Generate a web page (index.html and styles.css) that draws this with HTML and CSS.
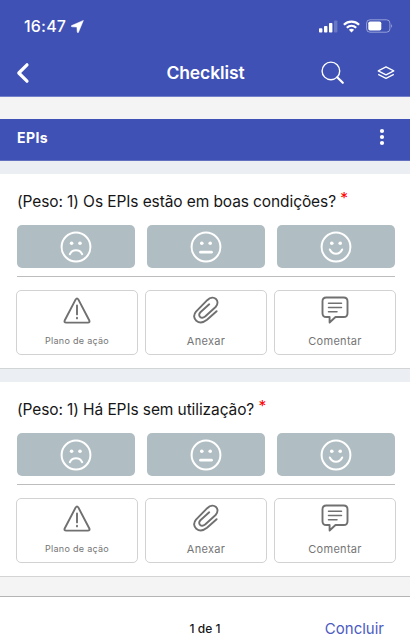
FILE: index.html
```html
<!DOCTYPE html>
<html lang="pt-BR">
  <head>
    <meta charset="UTF-8">
    <meta name="viewport" content="width=device-width, initial-scale=1">
    <title>Checklist</title>
    <link rel="stylesheet" href="styles.css">
  </head>
  <body>
    <svg class="sprite" width="0" height="0">
      <symbol id="sad" viewBox="0 0 32 32">
        <circle cx="16" cy="16" r="14.4"/>
        <circle class="eye" cx="11.6" cy="12.2" r="1.8"/>
        <circle class="eye" cx="20" cy="12.2" r="1.8"/>
        <path d="M9.8 23.2c2.6-5.2 9.8-5.2 12.4 0"/>
      </symbol>
      <symbol id="neutral" viewBox="0 0 32 32">
        <circle cx="16" cy="16" r="14.4"/>
        <circle class="eye" cx="11.8" cy="12.2" r="1.8"/>
        <circle class="eye" cx="20.2" cy="12.2" r="1.8"/>
        <path stroke-width="2.8" d="M10.5 21.2h11"/>
      </symbol>
      <symbol id="happy" viewBox="0 0 32 32">
        <circle cx="16" cy="16" r="14.4"/>
        <circle class="eye" cx="11.8" cy="12.2" r="1.8"/>
        <circle class="eye" cx="20.2" cy="12.2" r="1.8"/>
        <path d="M9.8 18.5c2.6 5.6 9.8 5.6 12.4 0"/>
      </symbol>
      <symbol id="warning" viewBox="0 0 28 28">
        <path d="M12.7 3.4 1.8 24.2Q.7 26.6 3.2 26.6H24.8Q27.3 26.6 26.2 24.2L15.3 3.4Q14 1.3 12.7 3.4Z"/>
        <path d="M14 9.4v9M14 21.8v.6"/>
      </symbol>
      <symbol id="clip" viewBox="0 0 28 28">
        <path d="M24.6 15.2 15 23.8C6.8 30.4-1.7 22.2 4 15.6L15.2 4.2C22-2.3 29 5.2 23.6 11L13.4 20.3C8.9 24 5.2 19.3 8.4 16.2L17.2 8.3"/>
      </symbol>
      <symbol id="comment" viewBox="0 0 28 28">
        <path d="M5.3 1.5H22.7Q26.5 1.5 26.5 5.3V17.2Q26.5 21 22.7 21H14.5L8.6 26.5V21H5.3Q1.5 21 1.5 17.2V5.3Q1.5 1.5 5.3 1.5Z"/>
        <path stroke-width="1.5" d="M7.5 7.2h13M7.5 11.5h13M7.5 15.8h8.5"/>
      </symbol>
    </svg>

    <header class="header">
      <div class="status-bar">
        <span class="time">16:47</span>
        <svg class="location" width="13" height="13" viewBox="0 0 13 13"><path d="M12.4.4.6 5.6q-1 .8.3 1.2l5 .3.3 5q.5 1.3 1.2.3Z" fill="#fff" stroke="#fff" stroke-width=".5"/></svg>
        <svg class="signal" width="19" height="13" viewBox="0 0 19 13" fill="#fff">
          <rect x="0" y="8.3" width="3.4" height="4.2" rx=".8"/>
          <rect x="5" y="6" width="3.4" height="6.5" rx=".8"/>
          <rect x="10" y="3" width="3.4" height="9.5" rx=".8"/>
          <rect x="15" y=".5" width="3.4" height="12" rx=".8" opacity=".22"/>
        </svg>
        <svg class="wifi" width="17" height="13" viewBox="0 0 17 13" fill="none" stroke="#fff" stroke-width="2.2">
          <path d="M.9 4.7C5.2.5 11.8.5 16.1 4.7M3.8 7.7c2.7-2.5 6.7-2.5 9.4 0"/>
          <path d="M5.9 9.8c1.5-1.3 3.7-1.3 5.2 0L8.5 12.4Z" fill="#fff" stroke="none"/>
        </svg>
        <svg class="battery" width="28" height="14" viewBox="0 0 28 14">
          <rect x=".6" y=".8" width="23.3" height="12.4" rx="3.4" fill="none" stroke="#fff" opacity=".45"/>
          <rect x="2.3" y="2.5" width="13" height="9" rx="1.8" fill="#fff"/>
          <path d="M25.3 5q1.8 2 0 4Z" fill="#fff" opacity=".6"/>
        </svg>
      </div>
      <div class="nav-bar">
        <svg class="back" width="14" height="22" viewBox="0 0 14 22"><path d="M11 2.8 2.8 11l8.2 8.2" fill="none" stroke="#fff" stroke-width="3.2" stroke-linecap="round" stroke-linejoin="round"/></svg>
        <h1>Checklist</h1>
        <div class="tools">
          <svg class="search" width="24" height="24" viewBox="0 0 24 24" fill="none" stroke="#fff">
            <circle cx="9.9" cy="9.9" r="8.8" stroke-width="1.4"/>
            <path d="m16.2 16.2 5.6 5.6" stroke-width="2.2" stroke-linecap="round"/>
          </svg>
          <svg class="layers" width="18" height="14" viewBox="0 0 18 14" fill="none" stroke="#fff" stroke-width="1.2" stroke-linejoin="round">
            <path d="m9 .9 7.8 4L9 8.9 1.2 4.9ZM1.2 8.4 9 12.4l7.8-4"/>
          </svg>
        </div>
      </div>
    </header>

    <main>
      <div class="section-title">
        <h2>EPIs</h2>
        <svg width="6" height="18" viewBox="0 0 6 18" fill="#fff"><circle cx="3" cy="3" r="2.1"/><circle cx="3" cy="9" r="2.1"/><circle cx="3" cy="15" r="2.1"/></svg>
      </div>

      <section class="question">
        <p class="question-text">(Peso: 1) Os EPIs estão em boas condições? <span class="required">*</span></p>
        <div class="answers">
          <button aria-label="Ruim"><svg><use href="#sad"/></svg></button>
          <button aria-label="Regular"><svg><use href="#neutral"/></svg></button>
          <button aria-label="Bom"><svg><use href="#happy"/></svg></button>
        </div>
        <div class="actions">
          <button class="plan"><svg><use href="#warning"/></svg><span>Plano de ação</span></button>
          <button><svg><use href="#clip"/></svg><span>Anexar</span></button>
          <button><svg><use href="#comment"/></svg><span>Comentar</span></button>
        </div>
      </section>

      <section class="question">
        <p class="question-text">(Peso: 1) Há EPIs sem utilização? <span class="required">*</span></p>
        <div class="answers">
          <button aria-label="Ruim"><svg><use href="#sad"/></svg></button>
          <button aria-label="Regular"><svg><use href="#neutral"/></svg></button>
          <button aria-label="Bom"><svg><use href="#happy"/></svg></button>
        </div>
        <div class="actions">
          <button class="plan"><svg><use href="#warning"/></svg><span>Plano de ação</span></button>
          <button><svg><use href="#clip"/></svg><span>Anexar</span></button>
          <button><svg><use href="#comment"/></svg><span>Comentar</span></button>
        </div>
      </section>
    </main>

    <footer class="footer">
      <span class="page">1 de 1</span>
      <a class="finish">Concluir</a>
    </footer>
  </body>
</html>
```
FILE: styles.css
```css
* {
  box-sizing: border-box;
}
body {
  margin: 0;
  height: 641px;
  overflow: hidden;
  display: flex;
  flex-direction: column;
  font-family: Inter, sans-serif;
  background-color: #f4f4f4;
}
h1, h2, p {
  margin: 0;
}
button {
  font-family: inherit;
  border: none;
  padding: 0;
}
svg {
  display: block;
  flex-shrink: 0;
}
.sprite {
  position: absolute;
}
.header {
  height: 97px;
  margin-bottom: 22px;
  background-color: #3f51b5;
  border-bottom: 1px solid #7380ca;
  color: #fff;
}
.status-bar {
  display: flex;
  align-items: center;
  height: 52px;
  padding: 0 16px 0 24px;
}
.time {
  font-size: 16px;
  font-weight: 500;
  letter-spacing: 0.2px;
}
.location {
  margin-left: 5px;
}
.signal {
  margin-left: auto;
}
.wifi {
  margin: 0 6px 0 5px;
}
.nav-bar {
  display: grid;
  grid-template-columns: 90px 1fr 90px;
  align-items: center;
  height: 41px;
  padding: 0 15px 0 16px;
}
.nav-bar h1 {
  font-size: 17.5px;
  font-weight: 600;
  line-height: 22px;
  letter-spacing: -0.1px;
  text-align: center;
}
.tools {
  display: flex;
  align-items: center;
  justify-content: flex-end;
  gap: 32px;
}
.section-title {
  display: flex;
  align-items: center;
  justify-content: space-between;
  height: 42px;
  padding: 0 25px 5px 17px;
  background-color: #3f51b5;
  border-bottom: 1px solid #6370bf;
  color: #fff;
}
.section-title h2 {
  font-size: 14px;
  font-weight: 700;
  letter-spacing: 0.4px;
}
.question {
  height: 208px;
  padding: 17px 14px 0 17px;
  background-color: #fff;
  border-top: 13px solid #ebeff4;
  border-bottom: 1px solid #d2d4d6;
}
.question-text {
  height: 34px;
  font-size: 15.5px;
  line-height: 22px;
  letter-spacing: -0.1px;
  color: #161616;
  white-space: nowrap;
}
.required {
  color: #f00;
  vertical-align: 3px;
  line-height: 1;
}
.answers {
  display: grid;
  grid-template-columns: repeat(3, 118px);
  gap: 12px;
  width: 378px;
  padding-bottom: 8px;
  border-bottom: 1px solid #bdbdbd;
}
.answers button {
  display: flex;
  align-items: center;
  justify-content: center;
  height: 43px;
  background-color: #b0bec3;
  border-radius: 5px;
}
.answers svg {
  width: 32px;
  height: 32px;
  fill: none;
  stroke: #fff;
  stroke-width: 2;
  stroke-linecap: round;
}
.eye {
  fill: #fff;
  stroke: none;
}
.actions {
  display: grid;
  grid-template-columns: repeat(3, 122px);
  gap: 7px;
  margin: 13px 0 0 -1px;
}
.actions button {
  display: flex;
  flex-direction: column;
  align-items: center;
  height: 65px;
  padding-top: 5px;
  background-color: #fff;
  border: 1px solid #d2d2d2;
  border-radius: 5px;
  color: #757575;
}
.actions svg {
  width: 28px;
  height: 28px;
  fill: none;
  stroke: #707070;
  stroke-width: 1.9;
  stroke-linecap: round;
  stroke-linejoin: round;
}
.actions span {
  margin-top: 10px;
  font-size: 11px;
  line-height: 14px;
  letter-spacing: 0.3px;
}
.actions .plan span {
  font-size: 9px;
  letter-spacing: 0.3px;
}
.footer {
  display: grid;
  grid-template-columns: 1fr auto 1fr;
  align-items: center;
  height: 45px;
  margin-top: auto;
  padding: 18px 26px 0;
  background-color: #fff;
  border-top: 1px solid #b4b4b4;
}
.page {
  grid-column: 2;
  font-size: 12px;
  font-weight: 500;
  color: #161616;
}
.finish {
  justify-self: end;
  font-size: 15px;
  color: #4b5bc0;
}
```
